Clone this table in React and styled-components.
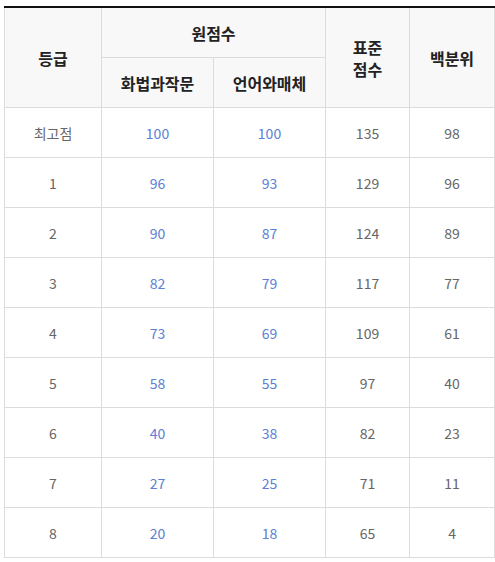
import React from 'react';
import styled, { createGlobalStyle } from 'styled-components';

const GlobalStyle = createGlobalStyle`
  html, body {
    margin: 0;
    padding: 0;
    background: #fff;
  }
  body {
    font-family: "Noto Sans CJK KR", "Noto Sans", sans-serif;
  }
`;

const Wrapper = styled.div`
  padding: 6px 1px 0 4px;
`;

const Table = styled.table`
  width: 490px;
  border-collapse: collapse;
  table-layout: fixed;
  border-top: 2px solid #111;
`;

const Th = styled.th`
  height: 49px;
  padding: 0;
  background: #f8f8f8;
  border: 1px solid #dcdcdc;
  border-top: none;
  font-size: 16px;
  font-weight: 700;
  color: #222;
  line-height: 20px;
  text-align: center;
  vertical-align: middle;
`;

const Line = styled.span`
  display: block;
  line-height: 22px;
`;

const Td = styled.td`
  height: 49px;
  padding: 0;
  border: 1px solid #dcdcdc;
  font-size: 14px;
  color: ${({ blue }) => (blue ? '#5b80d4' : '#666')};
  text-align: center;
  vertical-align: middle;
`;

const rows = [
  ['최고점', 100, 100, 135, 98],
  ['1', 96, 93, 129, 96],
  ['2', 90, 87, 124, 89],
  ['3', 82, 79, 117, 77],
  ['4', 73, 69, 109, 61],
  ['5', 58, 55, 97, 40],
  ['6', 40, 38, 82, 23],
  ['7', 27, 25, 71, 11],
  ['8', 20, 18, 65, 4],
];

export default function App() {
  return (
    <>
      <GlobalStyle />
      <Wrapper>
        <Table>
          <colgroup>
            <col style={{ width: 97 }} />
            <col style={{ width: 112 }} />
            <col style={{ width: 112 }} />
            <col style={{ width: 84 }} />
            <col style={{ width: 85 }} />
          </colgroup>
          <thead>
            <tr>
              <Th rowSpan={2}>등급</Th>
              <Th colSpan={2}>원점수</Th>
              <Th rowSpan={2}>
                <Line>표준</Line>
                <Line>점수</Line>
              </Th>
              <Th rowSpan={2}>백분위</Th>
            </tr>
            <tr>
              <Th>화법과작문</Th>
              <Th>언어와매체</Th>
            </tr>
          </thead>
          <tbody>
            {rows.map((r) => (
              <tr key={r[0]}>
                <Td>{r[0]}</Td>
                <Td blue>{r[1]}</Td>
                <Td blue>{r[2]}</Td>
                <Td>{r[3]}</Td>
                <Td>{r[4]}</Td>
              </tr>
            ))}
          </tbody>
        </Table>
      </Wrapper>
    </>
  );
}
